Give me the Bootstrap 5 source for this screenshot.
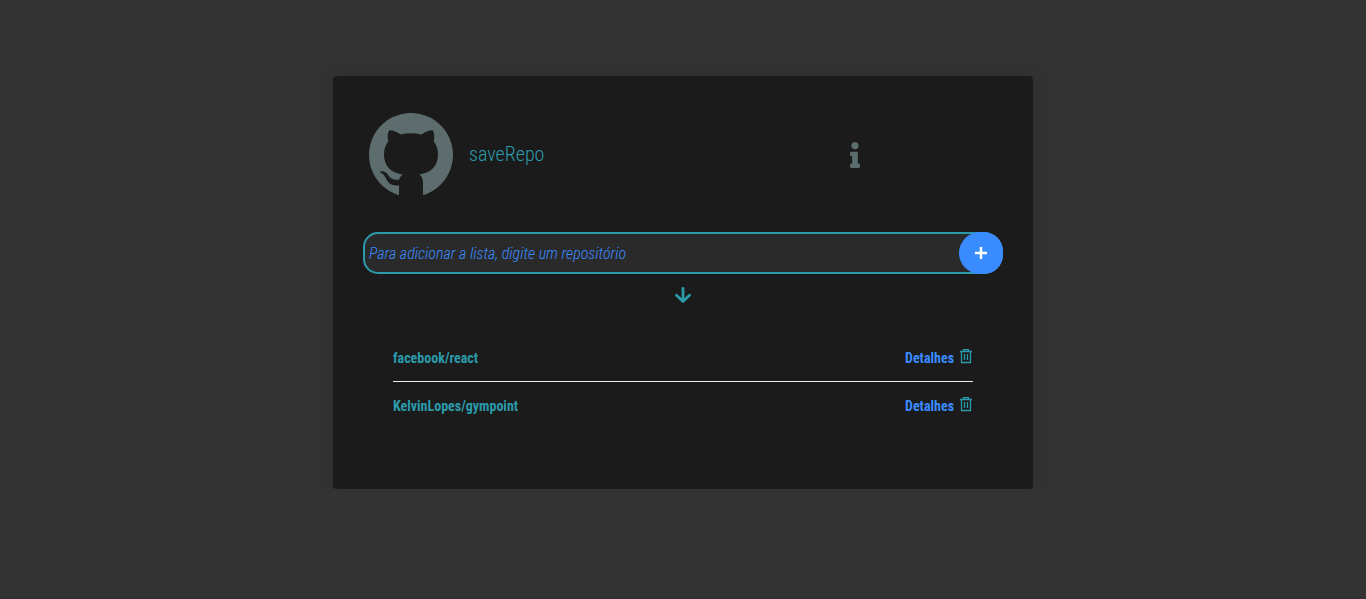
<!DOCTYPE html>
<html lang="pt-BR">
<head>
<meta charset="utf-8">
<meta name="viewport" content="width=device-width, initial-scale=1">
<title>saveRepo</title>
<link href="https://cdn.jsdelivr.net/npm/bootstrap@5.3.0/dist/css/bootstrap.min.css" rel="stylesheet">
<style>
  :root { --teal: #2b9aaa; --blue: #3a8bff; --slate: #5d6c6c; }
  body { background: #333; color: var(--teal); font-family: "Roboto Condensed", "Roboto", sans-serif; }
  .panel { max-width: 700px; margin: 76px auto 0; padding: 30px 30px 60px; background: #1b1b1b; border-radius: 4px; box-shadow: 0 0 20px rgba(0, 0, 0, .1); }
  .brand-title { padding-bottom: 2px; font-size: 20px; font-weight: 300; line-height: 24px; }
  .slate { color: var(--slate); }
  .panel-head { padding: 7px 6px 5px; margin-bottom: 30px; }
  .info-link { margin-right: 137px; }
  .repo-form { height: 42px; border: 2px solid var(--teal); border-radius: 15px 20px 20px 15px; background: #2a2a2a; }
  .repo-input { padding: 2px 4px 0; color: var(--blue); font-size: 16px; font-weight: 300; font-style: italic; outline: 0; }
  .repo-input::placeholder { color: var(--blue); opacity: 1; }
  .add-btn { width: 44px; height: 42px; margin: -2px; background: var(--blue); border-radius: 22px 20px 20px 22px; }
  .arrow { padding-top: 13px; }
  .repo-list { margin: 30px 30px 0; font-size: 14px; font-weight: 700; line-height: 18px; }
  .repo-item { height: 48px; padding-top: 15px; border-top: 1px solid transparent; }
  .repo-item + .repo-item { border-color: #eee; }
  .repo-item a { color: var(--blue); }
  .trash-btn { color: var(--teal); }
</style>
</head>
<body>
<main class="panel">
  <header class="panel-head d-flex align-items-center justify-content-between">
    <div class="d-flex align-items-center gap-3">
      <svg class="slate" width="84" height="84" viewBox="0 0 84 84" fill="currentColor" aria-hidden="true"><path d="M54 82.2A42 42 0 1 0 30 82.2V72.4C20 73 19 69 16.500 64.500C15.300 61.700 13.500 60.500 11 59.300C11 57.500 15 57.800 17.400 60C20.500 62.800 20.500 67.500 30 66.700Q31 63.500 33.500 61.400C22 60 15 53 15 41.500C15 36 16.500 32 19.200 28.500C18.300 24 18.500 20.500 20.300 17.300C24.500 17.300 28 19 31.500 21.500Q42 19 52.500 21.500C56 19 59.500 17.300 63.700 17.300C65.500 20.500 65.700 24 64.800 28.500C67.500 32 69 36 69 41.500C69 53 62 60 50.500 61.400Q54 64 54 70Z"/></svg>
      <h1 class="brand-title m-0">saveRepo</h1>
    </div>
    <a href="#" class="info-link slate d-flex" aria-label="Informações">
      <svg width="10" height="26" viewBox="0 0 192 512" fill="currentColor"><path d="M20 424.229h20V279.771H20c-11.046 0-20-8.954-20-20V212c0-11.046 8.954-20 20-20h112c11.046 0 20 8.954 20 20v212.229h20c11.046 0 20 8.954 20 20V492c0 11.046-8.954 20-20 20H20c-11.046 0-20-8.954-20-20v-47.771c0-11.046 8.954-20 20-20zM96 0C56.235 0 24 32.235 24 72s32.235 72 72 72 72-32.235 72-72S135.764 0 96 0z"/></svg>
    </a>
  </header>
  <form class="repo-form d-flex">
    <input class="repo-input flex-grow-1 border-0 bg-transparent" type="text" placeholder="Para adicionar a lista, digite um repositório" aria-label="Repositório">
    <button class="add-btn border-0 p-0 text-white d-flex align-items-center justify-content-center flex-shrink-0" type="button" aria-label="Adicionar">
      <svg width="12" height="12" viewBox="0 0 12 12" stroke="currentColor" stroke-width="2.500"><path d="M6 0V12M0 6H12"/></svg>
    </button>
  </form>
  <div class="arrow d-flex justify-content-center">
    <svg width="16" height="16" viewBox="0 0 16 16" fill="none" stroke="currentColor" stroke-width="2.800" stroke-linecap="round" stroke-linejoin="round" aria-hidden="true"><path d="M8 1.300V14.300M1.500 8.200L8 14.400L14.500 8.200"/></svg>
  </div>
  <ul class="repo-list list-unstyled">
    <li class="repo-item d-flex align-items-start justify-content-between">
      <span>facebook/react</span>
      <div class="d-flex align-items-start gap-1">
        <a href="#" class="text-decoration-none">Detalhes</a>
        <button class="trash-btn border-0 bg-transparent p-0 d-flex" type="button" aria-label="Excluir facebook/react"><svg width="15" height="15" viewBox="0 0 15 15" fill="none" stroke="currentColor" stroke-width="1.300"><path d="M2 2.500H14M5.500 2.500V.600H10.500V2.500M3.500 2.500V13.500H12.500V2.500M6.500 5V11M9.500 5V11"/></svg></button>
      </div>
    </li>
    <li class="repo-item d-flex align-items-start justify-content-between">
      <span>KelvinLopes/gympoint</span>
      <div class="d-flex align-items-start gap-1">
        <a href="#" class="text-decoration-none">Detalhes</a>
        <button class="trash-btn border-0 bg-transparent p-0 d-flex" type="button" aria-label="Excluir KelvinLopes/gympoint"><svg width="15" height="15" viewBox="0 0 15 15" fill="none" stroke="currentColor" stroke-width="1.300"><path d="M2 2.500H14M5.500 2.500V.600H10.500V2.500M3.500 2.500V13.500H12.500V2.500M6.500 5V11M9.500 5V11"/></svg></button>
      </div>
    </li>
  </ul>
</main>
<script src="https://cdn.jsdelivr.net/npm/bootstrap@5.3.0/dist/js/bootstrap.bundle.min.js"></script>
</body>
</html>
